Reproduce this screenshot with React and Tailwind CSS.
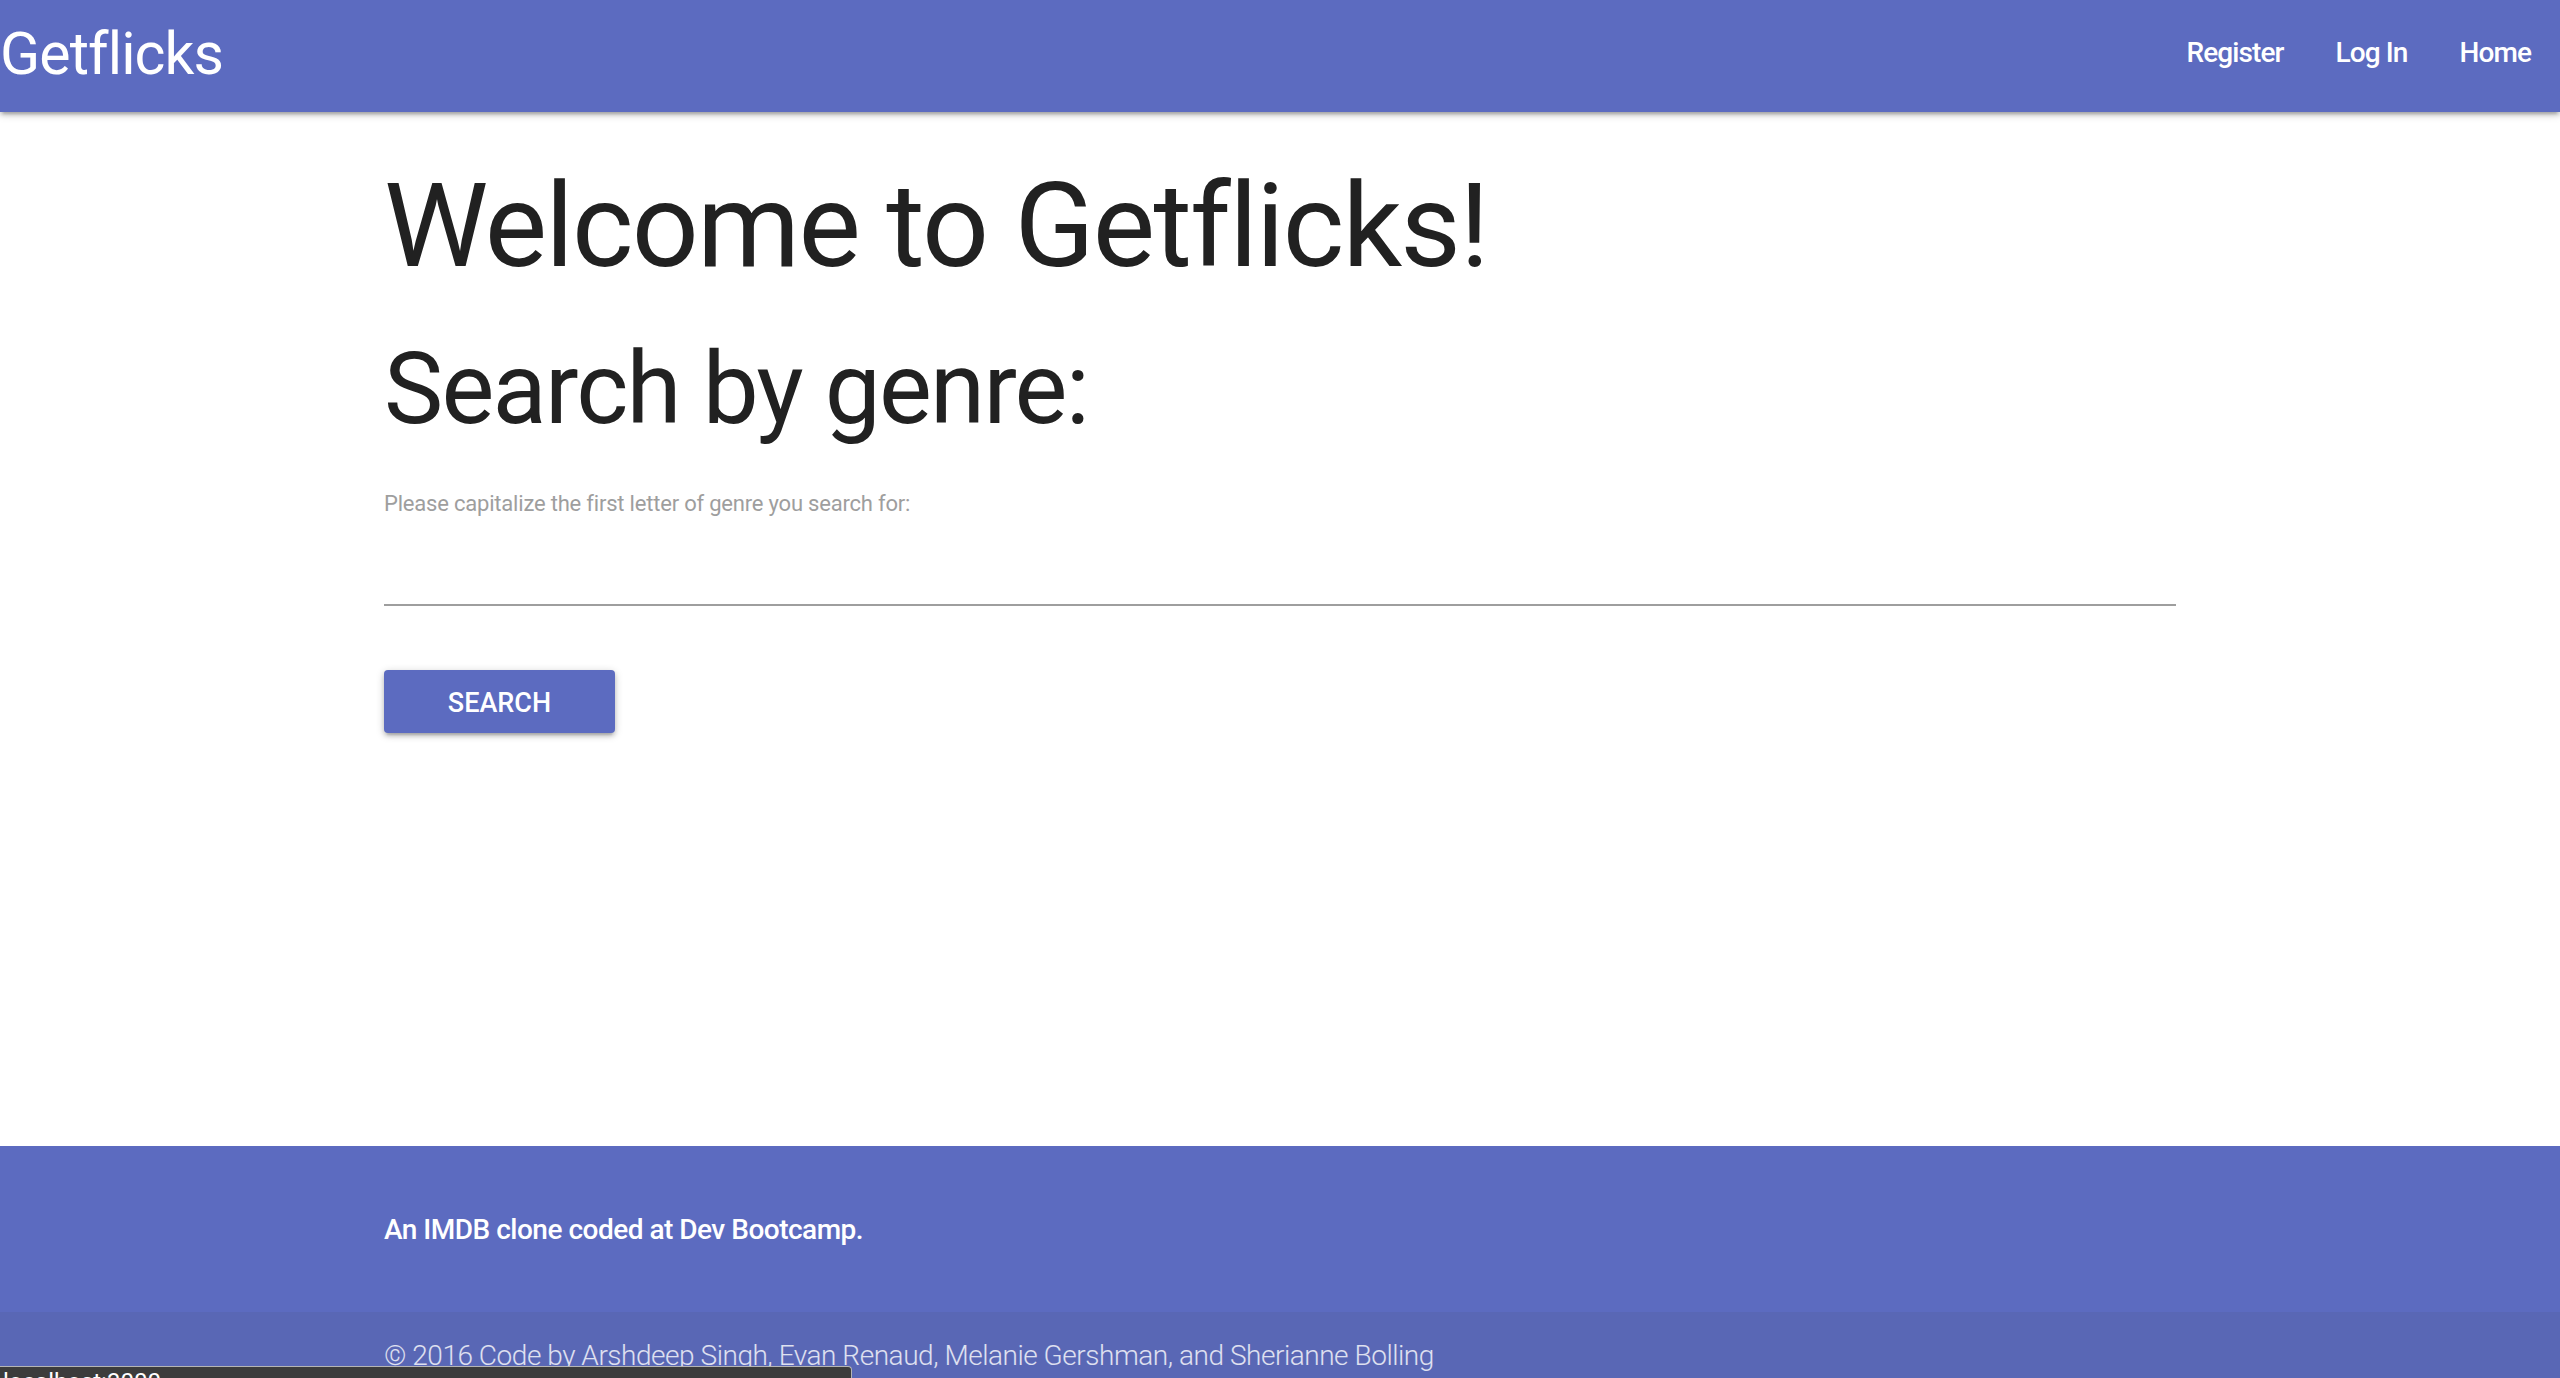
export default function App() {
  const font = { fontFamily: 'Roboto, "Noto Sans", sans-serif' };
  const navLink = 'px-[26px] text-[28px] font-medium tracking-[-0.9px] text-white';

  return (
    <div style={font} className="relative h-[1378px] overflow-hidden bg-white flex flex-col text-[#212121]">
      {/* Navbar */}
      <nav className="relative z-10 shrink-0 h-[112px] bg-[#5c6bc0] shadow-[0_3px_4px_0_rgba(0,0,0,0.14),0_5px_2px_-3px_rgba(0,0,0,0.12),0_2px_9px_0_rgba(0,0,0,0.2)]">
        <div className="h-full flex items-center justify-between pb-[6px]">
          <a href="#" className="text-[59px] leading-none tracking-[-0.9px] text-white">Getflicks</a>
          <ul className="flex items-center pr-[3px]">
            <li><a href="#" className={navLink}>Register</a></li>
            <li><a href="#" className={navLink}>Log In</a></li>
            <li><a href="#" className={navLink}>Home</a></li>
          </ul>
        </div>
      </nav>

      {/* Main */}
      <main className="flex-1">
        <div className="w-[1792px] mx-auto">
          <h1 className="mt-[50px] text-[117.6px] leading-[1.1] tracking-[-1.8px] font-normal">Welcome to Getflicks!</h1>
          <h2 className="mt-[44px] text-[99.7px] leading-[1.1] tracking-[-1.75px] font-normal">Search by genre:</h2>
          <form className="mt-[48px]" onSubmit={(e) => e.preventDefault()}>
            <label className="block text-[22px] leading-none tracking-[-0.2px] text-[#9e9e9e]">
              Please capitalize the first letter of genre you search for:
            </label>
            <input
              type="text"
              className="block w-full h-[91px] bg-transparent border-b-2 border-[#9e9e9e] outline-none text-[28px]"
            />
            <button
              type="submit"
              className="mt-[64px] w-[231px] h-[63px] pt-[4px] rounded-[4px] bg-[#5c6bc0] text-white text-[27px] font-medium uppercase shadow-[0_3px_4px_0_rgba(0,0,0,0.14),0_5px_2px_-3px_rgba(0,0,0,0.12),0_2px_9px_0_rgba(0,0,0,0.2)]"
            >
              Search
            </button>
          </form>
        </div>
      </main>

      {/* Footer */}
      <footer className="shrink-0 bg-[#5c6bc0]">
        <div className="h-[166px] pt-[63px]">
          <div className="w-[1792px] mx-auto">
            <p className="text-[28px] leading-[42px] font-medium tracking-[-0.5px] text-white">An IMDB clone coded at Dev Bootcamp.</p>
          </div>
        </div>
        <div className="h-[66px] bg-[#5967b5] pt-[23px]">
          <div className="w-[1792px] mx-auto">
            <p className="text-[28px] leading-[42px] font-light tracking-[-0.47px] text-white/80">
              © 2016 Code by Arshdeep Singh, Evan Renaud, Melanie Gershman, and Sherianne Bolling
            </p>
          </div>
        </div>
      </footer>

      {/* Browser status bubble */}
      <div className="absolute left-0 bottom-0 w-[852px] h-[12px] overflow-hidden bg-[#3c3c3c] border-t border-r border-[#b5b5b5] rounded-tr-[4px] pl-[3px] pt-[3px]">
        <span className="block text-[24px] leading-none text-white">localhost:3000</span>
      </div>
    </div>
  );
}
